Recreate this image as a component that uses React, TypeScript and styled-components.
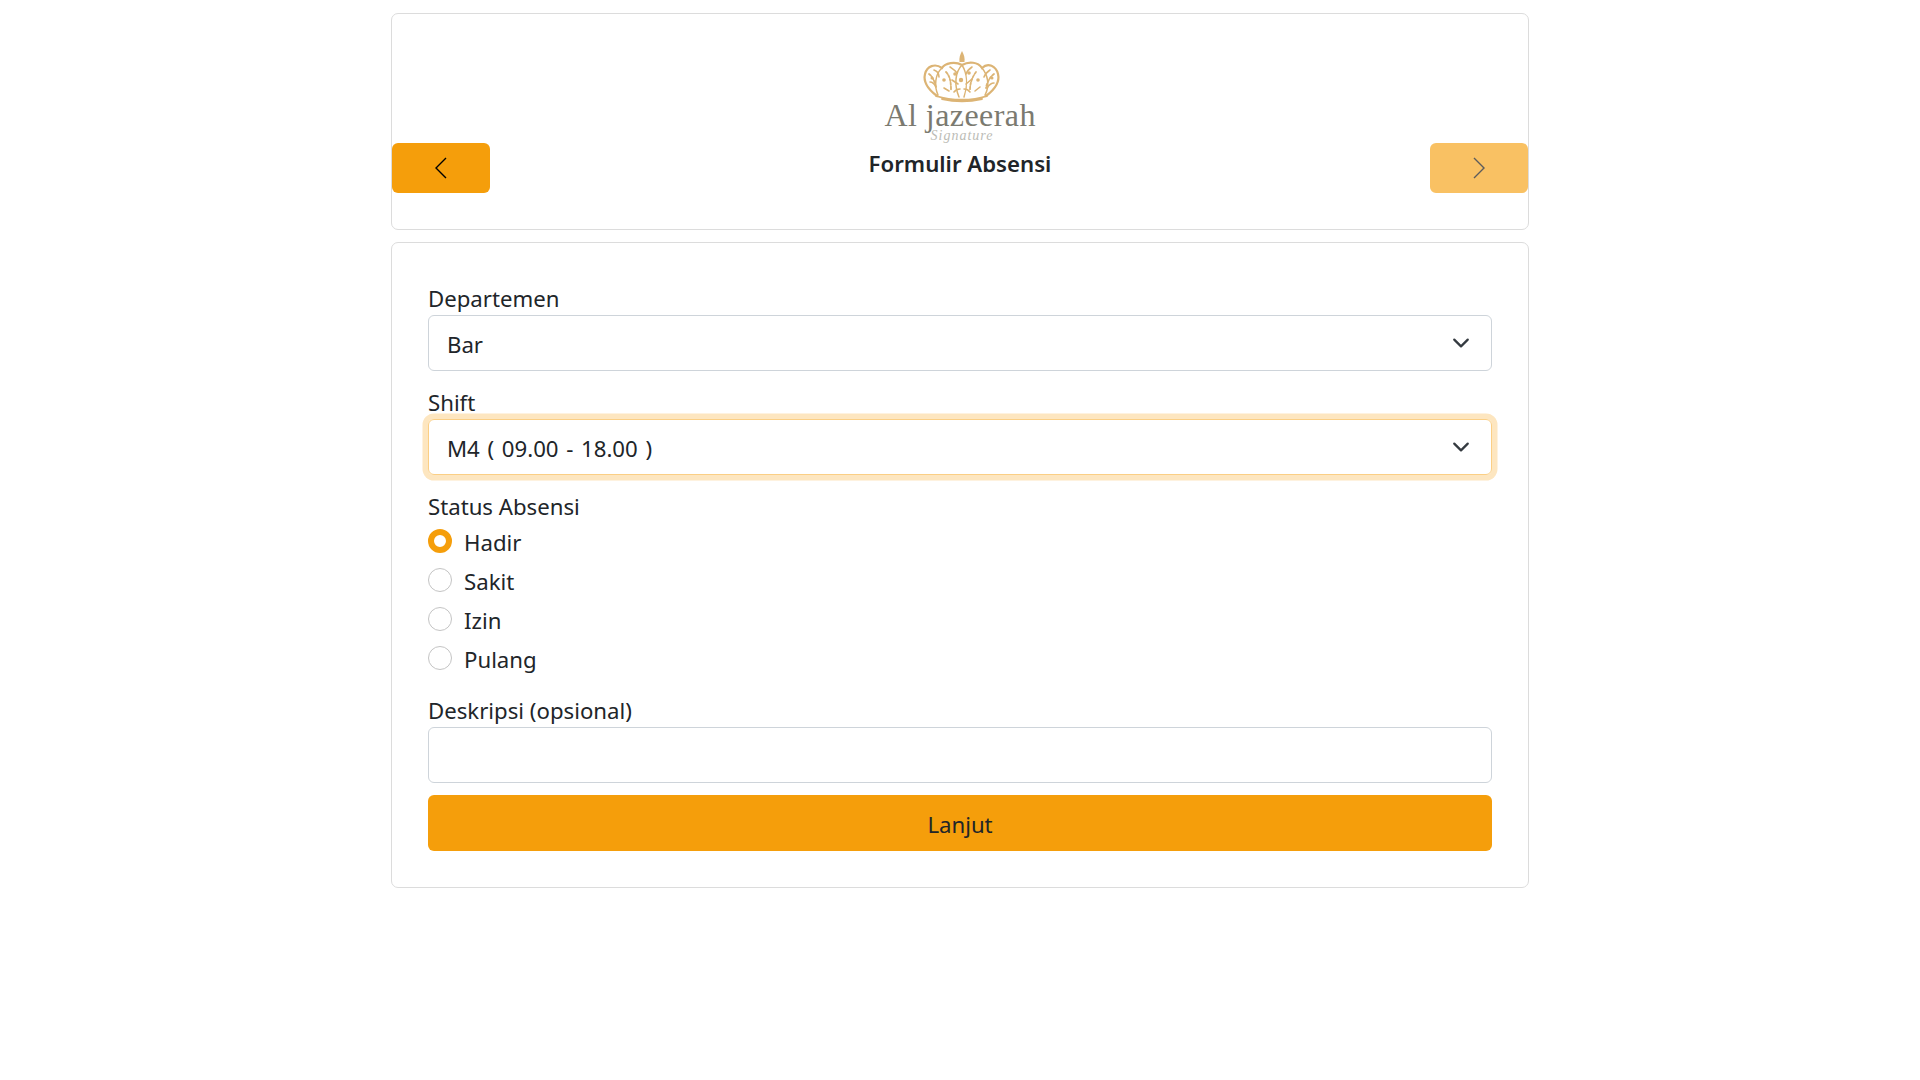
import styled, { createGlobalStyle } from 'styled-components';
import { useState } from 'react';

const GlobalStyle = createGlobalStyle`
  * {
    box-sizing: border-box;
  }

  body {
    margin: 0;
    background: #fff;
    color: #212529;
    font-family: 'Noto Sans', 'Open Sans', sans-serif;
    font-size: 22.2px;
    line-height: 36px;
  }
`;

const Page = styled.div`
  width: 1138px;
  margin: 0 auto;
  padding-top: 13px;
  display: flex;
  flex-direction: column;
  gap: 12px;
`;

const Card = styled.div`
  border: 1px solid #dcdcdc;
  border-radius: 7px;
  background: #fff;
`;

const HeaderCard = styled(Card)`
  height: 217px;
  display: flex;
  align-items: flex-start;
  justify-content: space-between;
`;

const NavButton = styled.button<{ $muted?: boolean }>`
  width: 98px;
  height: 50px;
  margin-top: 129px;
  border: 0;
  border-radius: 6px;
  background: ${({ $muted }) => ($muted ? '#f9c163' : '#f59e0b')};
  color: ${({ $muted }) => ($muted ? '#5c5c5c' : '#000')};
  display: flex;
  align-items: center;
  justify-content: center;
  padding: 0;
`;

const Brand = styled.div`
  padding-top: 36px;
  display: flex;
  flex-direction: column;
  align-items: center;
`;

const Title = styled.h1`
  margin: 3px 0 0;
  font-size: 22.2px;
  line-height: 30px;
  font-weight: 600;
  color: #212529;
`;

const FormCard = styled(Card)`
  padding: 36px;
`;

const Form = styled.form`
  display: flex;
  flex-direction: column;
`;

const Label = styled.label`
  display: block;
  height: 36px;
  padding-top: 2px;
`;

const Field = styled.div`
  margin-bottom: 12px;
`;

const SelectBox = styled.div<{ $focused?: boolean }>`
  height: 56px;
  border: 1px solid ${({ $focused }) => ($focused ? '#fbcf85' : '#ced4da')};
  border-radius: 6px;
  box-shadow: ${({ $focused }) => ($focused ? '0 0 0 5.5px #fde6c0' : 'none')};
  padding: 3px 21px 0 18px;
  display: flex;
  align-items: center;
  justify-content: space-between;
  word-spacing: 1.9px;
`;

const Chevron = styled.svg`
  width: 18px;
  height: 18px;
  margin-top: -3px;
  color: #343a40;
`;

const RadioGroup = styled.div`
  display: flex;
  flex-direction: column;
  margin-top: -1px;
  margin-bottom: 13px;
`;

const RadioRow = styled.label`
  height: 39px;
  padding-top: 2px;
  display: flex;
  align-items: center;
  gap: 12px;
`;

const RadioDot = styled.span<{ $checked?: boolean }>`
  width: 24px;
  height: 24px;
  border-radius: 50%;
  background: #fff;
  border: ${({ $checked }) => ($checked ? '6.5px solid #f59e0b' : '1px solid #c4c4c4')};
  margin-top: -4px;
`;

const TextInput = styled.input`
  display: block;
  width: 100%;
  height: 56px;
  border: 1px solid #ced4da;
  border-radius: 6px;
  padding: 0 18px;
  font: inherit;
  outline: none;
`;

const SubmitButton = styled.button`
  width: 100%;
  height: 56px;
  border: 0;
  border-radius: 6px;
  padding: 4px 0 0;
  background: #f59e0b;
  color: #212529;
  font: inherit;
`;

const STATUS_OPTIONS = ['Hadir', 'Sakit', 'Izin', 'Pulang'];

const ArrowIcon = ({ direction }: { direction: 'left' | 'right' }) => (
  <svg width="12" height="22" viewBox="0 0 12 22" fill="none" stroke="currentColor" strokeWidth="1.4">
    <path d={direction === 'left' ? 'M11 1 1 11l10 10' : 'M1 1l10 10L1 21'} />
  </svg>
);

const SelectChevron = () => (
  <Chevron viewBox="0 0 16 16" fill="none" stroke="currentColor" strokeWidth="2" strokeLinecap="round" strokeLinejoin="round">
    <path d="m2 5 6 6 6-6" />
  </Chevron>
);

const Logo = () => (
  <svg width="156" height="96" viewBox="0 0 156 96">
    <defs>
      <filter id="soft" x="-5%" y="-5%" width="110%" height="110%">
        <feGaussianBlur stdDeviation="0.45" />
      </filter>
    </defs>
    <g filter="url(#soft)">
      <path d="M80 1c2 3.500 3 7 2.500 11h-5C77 8 78 4.500 80 1Z" fill="#dcb474" />
      <g fill="none" stroke="#dcb474" strokeLinecap="round">
        <path d="M55 46C47 40 41 32 43 24c2-8 10-11 17-6 3-5 13-7 20-3 7-4 16-3 20 3 6-6 14-2 16 6 2 8-4 16-12 22" strokeWidth="2.200" />
        <path d="M54 46c16 5 36 5 51 0M60 49c13 3 27 3 40 0" strokeWidth="1.800" />
        <path d="M60 18c-7 6-8 18-4 27M100 18c6 7 8 18 3 27M80 15c-7 7-8 20-3 32M80 15c5 8 6 20 2 32" strokeWidth="1.500" />
        <path d="M47 24c4 3 6 8 7 14M112 24c-4 3-7 8-8 14M64 22c4 4 5 10 5 18M94 22c-3 4-6 10-6 18" strokeWidth="1.800" strokeDasharray="2.500 1.500" />
        <path d="M48 32c3 0 5 3 6 5M52 20c3 1 5 4 5 7M68 17c3 2 5 3 7 6M90 17c-3 2-5 4-6 7M108 20c-3 2-5 4-6 7M112 33c-3 0-5 2-7 5M70 30l6 4M90 29l-6 5M62 38l5 3M98 37l-5 4M72 42c2-3 4-3 6-3M88 42c-2-3-4-3-6-3" strokeWidth="1.600" />
      </g>
      <g fill="#dcb474">
        <circle cx="62" cy="30" r="1.800" />
        <circle cx="73" cy="24" r="1.800" />
        <circle cx="79" cy="30" r="2.200" />
        <circle cx="87" cy="23" r="1.800" />
        <circle cx="96" cy="30" r="1.800" />
        <circle cx="50" cy="28" r="1.500" />
        <circle cx="110" cy="28" r="1.500" />
      </g>
    </g>
    <text x="78" y="76" textAnchor="middle" textLength="151" fontFamily="'Liberation Serif', serif" fontSize="32" fill="#7b7a70">Al jazeerah</text>
    <text x="80" y="90" textAnchor="middle" fontFamily="'Liberation Serif', serif" fontStyle="italic" fontSize="14" letterSpacing="1" fill="#bcbcb6">Signature</text>
  </svg>
);

export default function App() {
  const [status, setStatus] = useState('Hadir');

  return (
    <>
      <GlobalStyle />
      <Page>
        <HeaderCard>
          <NavButton type="button">
            <ArrowIcon direction="left" />
          </NavButton>
          <Brand>
            <Logo />
            <Title>Formulir Absensi</Title>
          </Brand>
          <NavButton type="button" $muted>
            <ArrowIcon direction="right" />
          </NavButton>
        </HeaderCard>

        <FormCard>
          <Form>
            <Field>
              <Label>Departemen</Label>
              <SelectBox>
                Bar
                <SelectChevron />
              </SelectBox>
            </Field>
            <Field>
              <Label>Shift</Label>
              <SelectBox $focused>
                M4 ( 09.00 - 18.00 )
                <SelectChevron />
              </SelectBox>
            </Field>
            <Label>Status Absensi</Label>
            <RadioGroup>
              {STATUS_OPTIONS.map((option) => (
                <RadioRow key={option} onClick={() => setStatus(option)}>
                  <RadioDot $checked={status === option} />
                  {option}
                </RadioRow>
              ))}
            </RadioGroup>
            <Field>
              <Label>Deskripsi (opsional)</Label>
              <TextInput type="text" />
            </Field>
            <SubmitButton type="button">Lanjut</SubmitButton>
          </Form>
        </FormCard>
      </Page>
    </>
  );
}
